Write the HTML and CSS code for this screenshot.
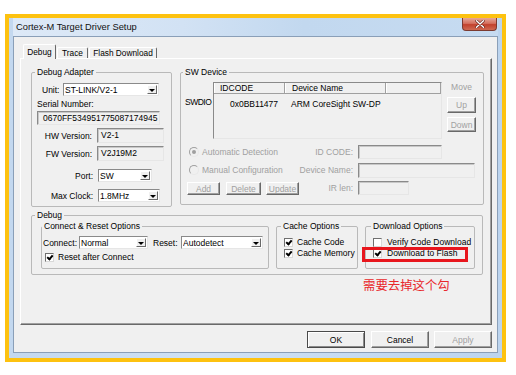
FILE: index.html
```html
<!DOCTYPE html>
<html lang="en">
<head>
<meta charset="utf-8">
<title>Cortex-M Target Driver Setup</title>
<link rel="stylesheet" href="styles.css">
</head>
<body>
<div class="shot">
  <div class="window">
    <div class="titlebar">
      <span class="title">Cortex-M Target Driver Setup</span>
      <span class="close"><svg width="10" height="8" viewBox="0 0 10 8"><path d="M1.5 0.8 L8.5 7.2 M8.5 0.8 L1.5 7.2" stroke="#5a1a12" stroke-width="2.6" stroke-linecap="round"/><path d="M1.5 0.8 L8.5 7.2 M8.5 0.8 L1.5 7.2" stroke="#fff" stroke-width="1.5" stroke-linecap="round"/></svg></span>
    </div>
    <div class="client">
      <div class="tabs">
        <div class="tab active">Debug</div>
        <div class="tab trace">Trace</div>
        <div class="tab flash">Flash Download</div>
      </div>
      <div class="page">
        <div class="toprow">
          <fieldset class="grp adapter">
            <legend>Debug Adapter</legend>
            <div class="row unit">
              <span class="lbl-unit">Unit:</span>
              <div class="combo w96"><span class="val">ST-LINK/V2-1</span><i class="arrow"></i></div>
            </div>
            <div class="serial-lbl">Serial Number:</div>
            <div class="box serial">0670FF534951775087174945</div>
            <div class="row ver hw"><span class="lbl">HW Version:</span><div class="box vbox">V2-1</div></div>
            <div class="row ver fw"><span class="lbl">FW Version:</span><div class="box vbox">V2J19M2</div></div>
            <div class="row sel port"><span class="lbl">Port:</span><div class="combo w54"><span class="val">SW</span><i class="arrow"></i></div></div>
            <div class="row sel clock"><span class="lbl">Max Clock:</span><div class="combo w62"><span class="val">1.8MHz</span><i class="arrow"></i></div></div>
          </fieldset>
          <fieldset class="grp swdev">
            <legend>SW Device</legend>
            <div class="swtop">
              <div class="swdio">SWDIO</div>
              <div class="list">
                <div class="hdr">
                  <div class="hc c1">IDCODE</div>
                  <div class="hc c2">Device Name</div>
                  <div class="hc c3"></div>
                </div>
                <div class="lrow">
                  <div class="lc c1">0x0BB11477</div>
                  <div class="lc c2">ARM CoreSight SW-DP</div>
                </div>
              </div>
              <div class="movecol">
                <div class="move">Move</div>
                <div class="btn dis up">Up</div>
                <div class="btn dis down">Down</div>
              </div>
            </div>
            <div class="swgrid">
              <div class="radio"><i class="rb on"></i>Automatic Detection</div>
              <div class="glbl">ID CODE:</div>
              <div class="box dbox w84"></div>
              <div class="radio"><i class="rb"></i>Manual Configuration</div>
              <div class="glbl">Device Name:</div>
              <div class="box dbox w117"></div>
              <div class="btnrow">
                <div class="btn dis b-add">Add</div>
                <div class="btn dis b-del">Delete</div>
                <div class="btn dis b-upd">Update</div>
              </div>
              <div class="glbl">IR len:</div>
              <div class="box dbox w51"></div>
            </div>
          </fieldset>
        </div>
        <fieldset class="grp debug">
          <legend>Debug</legend>
          <div class="dbgrow">
            <fieldset class="grp sub conn">
              <legend>Connect &amp; Reset Options</legend>
              <div class="connrow">
                <span class="lbl-conn">Connect:</span>
                <div class="combo w69"><span class="val">Normal</span><i class="arrow"></i></div>
                <span class="lbl-reset">Reset:</span>
                <div class="combo w82"><span class="val">Autodetect</span><i class="arrow"></i></div>
              </div>
              <div class="chkrow first-conn"><i class="chk on"></i>Reset after Connect</div>
            </fieldset>
            <fieldset class="grp sub cache">
              <legend>Cache Options</legend>
              <div class="chkrow r1"><i class="chk on"></i>Cache Code</div>
              <div class="chkrow r2"><i class="chk on"></i>Cache Memory</div>
            </fieldset>
            <fieldset class="grp sub dl">
              <legend>Download Options</legend>
              <div class="chkrow r1 wide"><i class="chk"></i>Verify Code Download</div>
              <div class="chkrow r2 wide mark"><i class="chk on"></i>Download to Flash<span class="redbox"></span></div>
            </fieldset>
          </div>
        </fieldset>
        <div class="note">需要去掉这个勾</div>
      </div>
      <div class="buttons">
        <div class="btn big default">OK</div>
        <div class="btn big cancel">Cancel</div>
        <div class="btn big dis apply">Apply</div>
      </div>
    </div>
  </div>
</div>
</body>
</html>
```
FILE: styles.css
```css
* { box-sizing: border-box; }
html, body { margin: 0; padding: 0; background: #fff; }
body {
  font-family: "Liberation Sans", Arial, sans-serif;
  font-size: 8.5px;
  line-height: 10px;
  color: #000;
}
.shot {
  margin: 14px 0 0 5px;
  width: 501px;
  height: 348px;
  border: 4px solid #fdc210;
}
.window {
  height: 100%;
  display: flex;
  flex-direction: column;
  padding: 0 4px 5px;
  background: linear-gradient(to right, #c3d8ef, #cfe1f4 40%, #bcd4ee);
}
.titlebar {
  height: 18px;
  position: relative;
  display: flex;
  align-items: center;
  padding-left: 3px;
  background: linear-gradient(to right, #dde9f7, #d2e2f4 35%, #c2d8ef 60%, #c6dbf1);
}
.title { font-size: 9.3px; line-height: 12px; color: #111; }
.close {
  position: absolute;
  top: 0;
  right: 1px;
  width: 35px;
  height: 13px;
  border: 1px solid #7b3a30;
  border-top: none;
  border-radius: 0 0 4px 4px;
  background: linear-gradient(to bottom, #e6a89a, #d5705e 45%, #c2412c 55%, #cf6a52);
  display: flex;
  align-items: center;
  justify-content: center;
}
.client {
  flex: 1;
  background: #f0f0f0;
  border: 1px solid #8a9fb8;
  padding: 7px 5px 4px 6px;
  display: flex;
  flex-direction: column;
}
.tabs {
  display: flex;
  align-items: flex-end;
  height: 14px;
  margin-left: 3px;
}
.tab {
  height: 11px;
  border: 1px solid;
  border-color: #fff #696969 transparent #fff;
  border-bottom: none;
  border-radius: 2px 2px 0 0;
  font-size: 8.3px;
  line-height: 10px;
  text-align: center;
  background: #f0f0f0;
}
.tab.active {
  height: 15px;
  margin-bottom: -1px;
  width: 33px;
  position: relative;
  z-index: 1;
  padding-top: 2px;
}
.tab.trace { width: 31px; margin-left: 1px; }
.tab.flash { width: 68px; margin-left: 1px; }
.page {
  flex: none;
  height: 267px;
  border: 1px solid;
  border-color: #fff #696969 #696969 #fff;
  box-shadow: inset -1px -1px 0 #a0a0a0;
  background: #f0f0f0;
  padding: 8px 0 0 10px;
}
.toprow { display: flex; align-items: flex-start; gap: 8px; }
.grp {
  margin: 0;
  padding: 0;
  border: 1px solid #b9b9b9;
  border-radius: 2px;
  min-width: 0;
}
.grp > legend {
  padding: 0 2px;
  margin-left: 3px;
  font-size: 8.5px;
  line-height: 10px;
}
.adapter { width: 141px; height: 140px; flex: none; }
.swdev { width: 304px; height: 138px; flex: none; }
.swdev > legend { margin-left: 2px; }
.row { display: flex; align-items: center; }
.unit { margin: 6px 0 0 10px; height: 13px; }
.lbl-unit { width: 21px; }
.combo {
  display: flex;
  align-items: center;
  height: 13px;
  background: #fff;
  border: 1px solid;
  border-color: #8a8a8a #e6e6e6 #e6e6e6 #8a8a8a;
  padding-left: 1px;
}
.combo .val { flex: 1; white-space: nowrap; overflow: hidden; }
.combo .arrow {
  width: 10px;
  height: 9px;
  margin-right: 1px;
  background: #f0f0f0;
  border: 1px solid;
  border-color: #fff #696969 #696969 #fff;
  display: flex;
  align-items: center;
  justify-content: center;
}
.combo .arrow::after {
  content: "";
  border-left: 3px solid transparent;
  border-right: 3px solid transparent;
  border-top: 3px solid #000;
  margin-top: 1px;
}
.w96 { width: 96px; }
.w54 { width: 54px; }
.w62 { width: 62px; }
.w69 { width: 69px; }
.w82 { width: 82px; }
.box {
  background: #f0f0f0;
  border: 1px solid;
  border-color: #8a8a8a #e6e6e6 #e6e6e6 #8a8a8a;
  box-shadow: inset 1px 1px 0 #c8c8c8;
}
.serial-lbl { margin: 3px 0 0 5px; }
.serial {
  margin: 2px 0 0 5px;
  width: 123px;
  height: 14px;
  padding-left: 5px;
  line-height: 12px;
}
.lbl { text-align: right; width: 60px; flex: none; }
.ver { height: 15px; margin-top: 3px; }
.vbox { margin-left: 5px; width: 67px; height: 15px; line-height: 13px; padding-left: 3px; }
.sel { height: 13px; }
.sel .lbl { width: 61px; }
.sel .combo { margin-left: 5px; }
.port { margin-top: 8px; }
.clock { margin-top: 7px; }

.swtop { display: flex; margin-top: 5px; }
.swdio {
  width: 28px;
  flex: none;
  margin-left: 4px;
  padding-top: 15px;
  letter-spacing: -0.5px;
  white-space: nowrap;
  overflow: hidden;
}
.list {
  width: 229px;
  flex: none;
  height: 57px;
  border: 1px solid;
  border-color: #8a8a8a #e6e6e6 #e6e6e6 #8a8a8a;
  background: #f0f0f0;
}
.hdr { display: flex; height: 11px; border-bottom: 1px solid #a0a0a0; }
.hc {
  height: 10px;
  line-height: 10px;
  border-right: 1px solid #a0a0a0;
  border-left: 1px solid #fff;
}
.hdr .c1 { width: 71px; padding-left: 5px; }
.hdr .c2 { width: 101px; padding-left: 6px; }
.hdr .c3 { flex: 1; }
.lrow { display: flex; margin-top: 5px; }
.lrow .c1 { width: 71px; padding-left: 16px; }
.lrow .c2 { padding-left: 6px; }
.movecol {
  width: 29px;
  flex: none;
  margin-left: 5px;
  display: flex;
  flex-direction: column;
  align-items: stretch;
}
.move { text-align: center; color: #a0a0a0; }
.btn {
  background: #f0f0f0;
  border: 1px solid;
  border-color: #fff #696969 #696969 #fff;
  box-shadow: inset -1px -1px 0 #a0a0a0;
  display: flex;
  align-items: center;
  justify-content: center;
  white-space: nowrap;
}
.btn.dis { color: #a0a0a0; }
.up { margin-top: 5px; height: 16px; }
.down { margin-top: 4px; height: 15px; }
.swgrid {
  display: grid;
  grid-template-columns: 112px 54px auto;
  grid-template-rows: 14px 14px 14px;
  row-gap: 4px;
  margin: 6px 0 0 6px;
  align-items: center;
}
.radio { display: flex; align-items: center; color: #a0a0a0; white-space: nowrap; }
.rb {
  width: 10px;
  height: 10px;
  margin: 0 3px 0 2px;
  border-radius: 50%;
  border: 1px solid;
  border-color: #a0a0a0 #e8e8e8 #e8e8e8 #a0a0a0;
  background: #f0f0f0;
  display: flex;
  align-items: center;
  justify-content: center;
}
.rb.on::after {
  content: "";
  width: 4px;
  height: 4px;
  border-radius: 50%;
  background: #a0a0a0;
}
.glbl { text-align: right; color: #a0a0a0; white-space: nowrap; }
.dbox { margin-left: 5px; height: 14px; justify-self: start; }
.w84 { width: 84px; }
.w117 { width: 117px; height: 15px; }
.w51 { width: 51px; }
.btnrow { display: flex; align-self: end; }
.btnrow .btn { height: 13px; }
.b-add { width: 36px; }
.b-del { width: 38px; margin-left: 6px; }
.b-upd { width: 36px; margin-left: 5px; }

.debug { width: 452px; height: 65px; margin-top: 3px; }
.dbgrow { display: flex; gap: 7px; margin: 1px 0 0 9px; }
.sub { height: 48px; flex: none; }
.conn { width: 228px; }
.conn > legend { margin-left: 0; }
.cache { width: 82px; }
.cache > legend { margin-left: 4px; }
.dl { width: 110px; }
.dl > legend { margin-left: 5px; }
.connrow { display: flex; align-items: center; height: 13px; margin-top: 5px; }
.lbl-conn { width: 36px; margin-left: 1px; }
.lbl-reset { width: 28px; margin-left: 5px; }
.chkrow {
  display: flex;
  align-items: center;
  height: 10px;
  white-space: nowrap;
  position: relative;
}
.first-conn { margin-top: 3px; }
.first-conn .chk { margin-left: 3px; margin-right: 4px; }
.r1 { margin-top: 6px; }
.r2 { margin-top: 1px; }
.cache .chk { margin-left: 7px; margin-right: 4px; }
.dl .chk { margin-left: 7px; margin-right: 5px; }
.chk {
  width: 9px;
  height: 9px;
  flex: none;
  background: #fff;
  border: 1px solid;
  border-color: #6f6f6f #d8d8d8 #d8d8d8 #6f6f6f;
  position: relative;
}
.chk.on::after {
  content: "";
  position: absolute;
  left: 1px;
  top: 0px;
  width: 2px;
  height: 4px;
  border: solid #000;
  border-width: 0 2px 2px 0;
  transform: translate(1px, 0) rotate(40deg);
}
.redbox {
  position: absolute;
  left: -4px;
  top: -1px;
  width: 106px;
  height: 15px;
  border: 3px solid #e8161d;
}
.note {
  margin: 3px 0 0 332px;
  font-family: "Noto Sans CJK SC", "Noto Sans", sans-serif;
  font-size: 12.4px;
  line-height: 14px;
  color: #e8282b;
}
.buttons {
  display: flex;
  justify-content: flex-end;
  margin-top: 6px;
}
.btn.big { height: 17px; width: 58px; }
.btn.default {
  border-color: #4a4a4a;
  box-shadow: inset 1px 1px 0 #fff, inset -1px -1px 0 #8a8a8a;
}
.cancel { margin-left: 6px; }
.apply { margin-left: 5px; }
```
